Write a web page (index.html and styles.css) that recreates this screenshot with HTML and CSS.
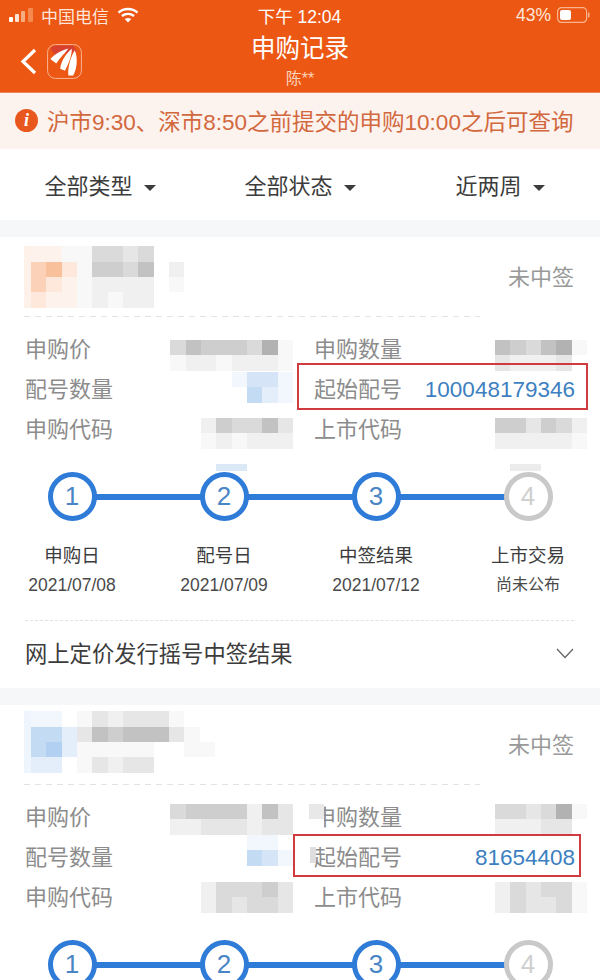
FILE: index.html
```html
<!DOCTYPE html>
<html lang="zh-CN">
<head>
<meta charset="UTF-8">
<meta name="viewport" content="width=device-width, initial-scale=1.0">
<title>申购记录</title>
<link rel="stylesheet" href="styles.css">
</head>

<body>
<header class="top">
    <div class="status-bar">
        <div class="status-left">
            <svg class="signal" width="26" height="16" viewBox="0 0 26 16">
                <rect x="0" y="10" width="4" height="5" rx="1" fill="#fff"/>
                <rect x="6" y="7" width="4" height="8" rx="1" fill="#fde3d3"/>
                <rect x="12" y="4" width="4" height="11" rx="1" fill="#f7ab80"/>
                <rect x="19" y="1" width="5" height="14" rx="1" fill="#f48a50"/>
            </svg>
            <span>中国电信</span>
            <svg class="wifi" width="22" height="16" viewBox="0 0 22 16" fill="none" stroke="#fff" stroke-width="2.4">
                <path d="M1.5 5.6C6.8 .8 15.2 .8 20.5 5.6"/>
                <path d="M5 9C8.300 6.200 13.700 6.200 17 9"/>
                <path d="M11 15.500L7.800 12C9.600 10.500 12.400 10.500 14.200 12Z" fill="#fff" stroke="none"/>
            </svg>
        </div>
        <div class="status-time">下午 12:04</div>
        <div class="status-right">
            <span>43%</span>
            <svg width="33" height="16" viewBox="0 0 33 16">
                <rect x=".6" y=".6" width="29" height="14.800" rx="4" fill="none" stroke="#f7b48f" stroke-width="1.200"/>
                <rect x="3" y="3" width="11" height="10" rx="2" fill="#fff"/>
                <rect x="31" y="5.500" width="1.500" height="5" rx=".7" fill="#f7b48f"/>
            </svg>
        </div>
    </div>
    <div class="nav">
        <div class="nav-left">
            <svg class="back" width="17" height="27" viewBox="0 0 17 27" fill="none" stroke="#fff" stroke-width="3.200">
                <path d="M15 2L3 13.500L15 25"/>
            </svg>
            <svg class="logo" width="35" height="35" viewBox="0 0 36 36">
                <rect x=".6" y=".6" width="34.800" height="34.800" rx="8" fill="#ec5814" stroke="#f9b697" stroke-width="1"/>
                <path d="M4 5.500Q5 1.500 9 1.500H27L31 8L8 11Z" fill="#d8412f"/>
                <path d="M3.500 15.500C8 10 15 6.500 22 4.500C19 9 14 13 9.500 20Z" fill="#fff"/>
                <path d="M13.500 25.500C14.500 18 19 10.500 25.500 5C25.500 12 22.500 20 18.500 27.500Z" fill="#fff"/>
                <path d="M22 32.500C21 25 24 14 28.500 6.500C31.500 13 31.500 24 27 32.500Z" fill="#fff"/>
            </svg>
        </div>
        <div class="nav-title">
            <h1>申购记录</h1>
            <div class="nav-sub">陈**</div>
        </div>
    </div>
</header>

<div class="notice">
    <span class="notice-icon">i</span>
    <span>沪市9:30、深市8:50之前提交的申购10:00之后可查询</span>
</div>

<div class="filters">
    <div class="filter">全部类型<span class="caret"></span></div>
    <div class="filter">全部状态<span class="caret"></span></div>
    <div class="filter">近两周<span class="caret"></span></div>
</div>

<section class="card">
    <div class="card-head">
        <div class="mosaic cols-10 edge-orange">
            <i class="o0"></i><i class="o0"></i><i class="s1"></i><i class="s1"></i><i class="s4"></i><i class="s4"></i><i class="s3"></i><i class="s4"></i><i></i><i></i>
            <i class="o2"></i><i class="o3"></i><i class="o1"></i><i class="s1"></i><i class="s5"></i><i class="s5"></i><i class="s4"></i><i class="s6"></i><i></i><i class="s2"></i>
            <i class="o2"></i><i class="o1"></i><i class="o0"></i><i class="s1"></i><i class="s2"></i><i class="s2"></i><i class="s2"></i><i class="s2"></i><i></i><i class="s1"></i>
            <i class="o1"></i><i class="o0"></i><i class="o0"></i><i class="s1"></i><i class="s2"></i><i class="s1"></i><i class="s2"></i><i class="s2"></i><i></i><i></i>
        </div>
        <span class="card-state">未中签</span>
    </div>
    <div class="fields">
        <div class="field">
            <span>申购价</span>
            <div class="mosaic cols-8 at-11">
                <i class="s4"></i><i class="s6"></i><i class="s5"></i><i class="s5"></i><i class="s5"></i><i class="s4"></i><i class="s7"></i><i class="s1"></i>
                <i class="s1"></i><i class="s2"></i><i class="s2"></i><i class="s1"></i><i class="s2"></i><i class="s2"></i><i class="s2"></i><i class="s1"></i>
            </div>
        </div>
        <div class="field field-right">
            <span>申购数量</span>
            <div class="mosaic cols-6 at-11">
                <i class="s6"></i><i class="s5"></i><i class="s4"></i><i class="s6"></i><i class="s7"></i><i class="s1"></i>
                <i class="s3"></i><i class="s2"></i><i class="s2"></i><i class="s2"></i><i class="s3"></i><i></i>
            </div>
        </div>
        <div class="field">
            <span>配号数量</span>
            <div class="mosaic cols-4 at-3">
                <i class="b0"></i><i class="b2"></i><i class="b2"></i><i class="b0"></i>
                <i></i><i class="b3"></i><i class="b1"></i><i class="b0"></i>
            </div>
        </div>
        <div class="field field-right">
            <span>起始配号</span>
            <span class="field-value">100048179346</span>
            <div class="highlight highlight-a"></div>
        </div>
        <div class="field">
            <span>申购代码</span>
            <div class="mosaic cols-6 at-9">
                <i class="s2"></i><i class="s5"></i><i class="s4"></i><i class="s4"></i><i class="s6"></i><i class="s3"></i>
                <i class="s1"></i><i class="s2"></i><i class="s1"></i><i class="s2"></i><i class="s2"></i><i class="s2"></i>
            </div>
        </div>
        <div class="field field-right">
            <span>上市代码</span>
            <div class="mosaic cols-6 at-9">
                <i class="s5"></i><i class="s5"></i><i class="s3"></i><i class="s5"></i><i class="s4"></i><i class="s2"></i>
                <i class="s2"></i><i class="s2"></i><i class="s2"></i><i class="s2"></i><i class="s2"></i><i class="s1"></i>
            </div>
        </div>
    </div>
    <div class="steps">
        <div class="step"><div class="step-num">1</div><div class="step-name">申购日</div><div class="step-date">2021/07/08</div></div>
        <div class="step"><span class="smear smear-blue"></span><div class="step-num">2</div><div class="step-name">配号日</div><div class="step-date">2021/07/09</div></div>
        <div class="step"><div class="step-num">3</div><div class="step-name">中签结果</div><div class="step-date">2021/07/12</div></div>
        <div class="step step-todo"><span class="smear smear-grey"></span><div class="step-num">4</div><div class="step-name">上市交易</div><div class="step-date">尚未公布</div></div>
    </div>
    <div class="card-foot">
        <span>网上定价发行摇号中签结果</span>
        <svg width="18" height="11" viewBox="0 0 18 11" fill="none" stroke="#666" stroke-width="1.300">
            <path d="M1 1L9 9.500L17 1"/>
        </svg>
    </div>
</section>

<section class="card card-last">
    <div class="card-head">
        <div class="mosaic cols-12 edge-blue lifted">
            <i class="b0"></i><i class="b0"></i><i></i><i class="s1"></i><i class="s3"></i><i class="s2"></i><i class="s3"></i><i class="s3"></i><i class="s3"></i><i class="s1"></i><i></i><i></i>
            <i class="b3"></i><i class="b3"></i><i class="b1"></i><i class="s3"></i><i class="s6"></i><i class="s5"></i><i class="s6"></i><i class="s6"></i><i class="s6"></i><i class="s3"></i><i class="s1"></i><i></i>
            <i class="b3"></i><i class="b4"></i><i class="b1"></i><i class="s1"></i><i class="s1"></i><i class="s1"></i><i class="s1"></i><i class="s1"></i><i></i><i></i><i class="s1"></i><i class="s1"></i>
            <i class="b1"></i><i class="b1"></i><i></i><i class="s1"></i><i class="s3"></i><i class="s2"></i><i class="s3"></i><i class="s3"></i><i></i><i></i><i></i><i></i>
        </div>
        <span class="card-state">未中签</span>
    </div>
    <div class="fields">
        <div class="field">
            <span>申购价</span>
            <div class="mosaic cols-8 at-7">
                <i class="s4"></i><i class="s5"></i><i class="s5"></i><i class="s5"></i><i class="s5"></i><i class="s2"></i><i class="s6"></i><i class="s3"></i>
                <i class="s2"></i><i class="s2"></i><i class="s3"></i><i class="s3"></i><i class="s3"></i><i class="s2"></i><i class="s3"></i><i class="s3"></i>
            </div>
        </div>
        <div class="field field-right">
            <span>申购数量</span>
            <span class="smudge smudge-top"></span>
            <div class="mosaic cols-6 at-7">
                <i class="s4"></i><i class="s4"></i><i class="s3"></i><i class="s4"></i><i class="s7"></i><i class="s1"></i>
                <i class="s2"></i><i class="s2"></i><i class="s2"></i><i class="s3"></i><i class="s3"></i><i></i>
            </div>
        </div>
        <div class="field">
            <span>配号数量</span>
            <div class="mosaic cols-4 at-n2">
                <i></i><i class="b0"></i><i class="b0"></i><i></i>
                <i></i><i class="b3"></i><i class="b2"></i><i class="b0"></i>
            </div>
        </div>
        <div class="field field-right">
            <span>起始配号</span>
            <span class="smudge smudge-low"></span>
            <span class="field-value">81654408</span>
            <div class="highlight highlight-b"></div>
        </div>
        <div class="field">
            <span>申购代码</span>
            <div class="mosaic cols-6 at-5">
                <i class="s2"></i><i class="s4"></i><i class="s4"></i><i class="s4"></i><i class="s5"></i><i class="s3"></i>
                <i class="s2"></i><i class="s4"></i><i class="s3"></i><i class="s4"></i><i class="s4"></i><i class="s3"></i>
            </div>
        </div>
        <div class="field field-right">
            <span>上市代码</span>
            <div class="mosaic cols-6 at-5">
                <i class="s2"></i><i class="s4"></i><i class="s3"></i><i class="s4"></i><i class="s4"></i><i class="s1"></i>
                <i class="s2"></i><i class="s4"></i><i class="s3"></i><i class="s3"></i><i class="s4"></i><i class="s1"></i>
            </div>
        </div>
    </div>
    <div class="steps steps-cut">
        <div class="step"><div class="step-num">1</div></div>
        <div class="step"><span class="smear smear-blue"></span><div class="step-num">2</div></div>
        <div class="step"><div class="step-num">3</div></div>
        <div class="step step-todo"><span class="smear smear-grey"></span><div class="step-num">4</div></div>
    </div>
</section>
</body>
</html>
```

FILE: styles.css
```css
html, body {
    height: 980px;
    overflow: hidden;
}
body {
    margin: 0;
    background-color: #f5f7f9;
    font-family: "Liberation Sans", "Noto Sans CJK SC", sans-serif;
    font-size: 22px;
    color: #444;
}

/* orange header */
.top {
    height: 92px;
    background-color: #ec5814;
    color: #fff;
    border-bottom: 1px solid #f2835a;
}
.status-bar {
    height: 30px;
    padding: 0 10px 0 9px;
    box-sizing: border-box;
    display: grid;
    grid-template-columns: 1fr auto 1fr;
    align-items: center;
    font-size: 17px;
    color: #fde6d9;
}
.status-left {
    display: flex;
    align-items: center;
}
.signal {
    margin-right: 6px;
}
.wifi {
    margin-left: 8px;
}
.status-time {
    color: #fff;
    font-size: 17.500px;
}
.status-right {
    display: flex;
    justify-content: flex-end;
    align-items: center;
    gap: 6px;
    font-size: 17.500px;
}
.nav {
    height: 62px;
    display: grid;
    grid-template-columns: 1fr auto 1fr;
}
.nav-left {
    display: flex;
    align-items: center;
    padding-left: 20px;
    gap: 10px;
}
.nav-title {
    padding-top: 3px;
    text-align: center;
}
.nav-title h1 {
    margin: 0;
    font-size: 24.500px;
    font-weight: normal;
    line-height: 32px;
}
.nav-sub {
    margin-top: 2px;
    font-size: 16px;
    line-height: 24px;
    color: #fbd3bc;
}

/* notice */
.notice {
    height: 56px;
    box-sizing: border-box;
    padding: 0 0 2px 15px;
    display: flex;
    align-items: center;
    gap: 9px;
    background-color: #fcf2ee;
    color: #d2683d;
    font-size: 22.500px;
}
.notice-icon {
    width: 23px;
    height: 23px;
    border-radius: 50%;
    background-color: #e8581e;
    color: #fff;
    font-family: "Liberation Serif", serif;
    font-size: 18px;
    font-style: italic;
    font-weight: bold;
    line-height: 23px;
    text-align: center;
}

/* filters */
.filters {
    height: 71px;
    box-sizing: border-box;
    padding-bottom: 2px;
    margin-bottom: 17px;
    display: grid;
    grid-template-columns: repeat(3, 1fr);
    align-items: center;
    background-color: #fff;
    text-align: center;
    color: #3c3c3c;
}
.caret {
    display: inline-block;
    margin-left: 11px;
    vertical-align: middle;
    border-top: 6px solid #3c3c3c;
    border-left: 6px solid transparent;
    border-right: 6px solid transparent;
}

/* cards */
.card {
    margin-bottom: 17px;
    background-color: #fff;
}
.card-last {
    margin-bottom: 0;
}
.card-head {
    height: 80px;
    box-sizing: border-box;
    padding: 0 26px 0 24px;
    display: flex;
    justify-content: space-between;
    align-items: center;
    position: relative;
}
/* the blur in the shot wipes out the end of this line */
.card-head::after {
    content: "";
    position: absolute;
    left: 24px;
    width: 456px;
    bottom: 0;
    height: 1px;
    background-image: linear-gradient(to right, #e2e2e2 6px, transparent 6px);
    background-size: 11px 1px;
}
.card-state {
    color: #999;
    margin-top: -4px;
}
.lifted {
    margin-bottom: 6px;
}

/* pixelated parts */
.mosaic {
    display: grid;
    grid-auto-rows: 15.330px;
    flex-shrink: 0;
}
.mosaic i {
    display: block;
}
.cols-4 { grid-template-columns: repeat(4, 15.330px); }
.cols-6 { grid-template-columns: repeat(6, 15.330px); }
.cols-8 { grid-template-columns: repeat(8, 15.330px); }
.cols-10 { grid-template-columns: repeat(10, 15.330px); }
.cols-12 { grid-template-columns: repeat(12, 15.330px); }
.at-11 { margin-top: 11px; }
.at-9 { margin-top: 9px; }
.at-7 { margin-top: 7px; }
.at-5 { margin-top: 5px; }
.at-3 { margin-top: 3px; }
.at-n2 { margin-top: -2px; }
.edge-orange { border-left: 7px solid #fdf1e9; margin-right: auto; }
.edge-blue { border-left: 7px solid #eef5fc; margin-right: auto; }
.s1 { background-color: #f8f8f8; }
.s2 { background-color: #f0f0f0; }
.s3 { background-color: #e6e6e6; }
.s4 { background-color: #dadada; }
.s5 { background-color: #cecece; }
.s6 { background-color: #c2c2c2; }
.s7 { background-color: #b2b2b2; }
.o0 { background-color: #fef3ec; }
.o1 { background-color: #fde8db; }
.o2 { background-color: #fbd2b8; }
.o3 { background-color: #f9c09c; }
.b0 { background-color: #f1f7fd; }
.b1 { background-color: #e3eefa; }
.b2 { background-color: #d5e5f7; }
.b3 { background-color: #c4dbf4; }
.b4 { background-color: #b2d0f1; }

/* field rows */
.fields {
    padding: 12px 25px 0 25px;
    display: grid;
    grid-template-columns: 268px 261px;
    grid-auto-rows: 40px;
    column-gap: 21px;
    line-height: 42px;
    color: #8c8c8c;
}
.field {
    display: flex;
    justify-content: space-between;
    height: 40px;
    position: relative;
}
.field-right .mosaic {
    margin-right: -12px;
}
.field-value {
    color: #3d7fc0;
    font-size: 22.500px;
}
.highlight {
    position: absolute;
    border: 2px solid #cf3b3f;
}
.highlight-a {
    left: -17px;
    right: -13px;
    top: -6px;
    bottom: -1px;
}
.highlight-b {
    left: -21px;
    right: -6px;
    top: -3px;
    bottom: 0;
}
.smudge {
    position: absolute;
    background-color: #f2f2f2;
}
.smudge-top {
    left: -5px;
    top: 7px;
    width: 15px;
    height: 30px;
    background-image: linear-gradient(#e8e8e8 15px, #fff 15px);
}
.smudge-low {
    left: -4px;
    top: 10px;
    width: 6px;
    height: 16px;
    background-color: #dedede;
}

/* progress steps */
.steps {
    margin-top: 23px;
    padding: 0 22px;
    display: flex;
    justify-content: space-between;
    text-align: center;
}
.steps-cut {
    height: 40px;
    overflow: hidden;
}
.step {
    width: 100px;
    position: relative;
}
.step:not(:last-child)::after {
    content: "";
    position: absolute;
    left: 50%;
    top: 22px;
    width: 152px;
    height: 6px;
    background-color: #2f7bd8;
}
.step-num {
    width: 49px;
    height: 49px;
    box-sizing: border-box;
    margin: 0 auto;
    padding-top: 5px;
    border: 5px solid #2f7bd8;
    border-radius: 50%;
    background-color: #fff;
    color: #4a86c5;
    font-size: 26px;
    line-height: 29px;
    position: relative;
    z-index: 1;
}
.step-todo .step-num {
    border-color: #c9c9c9;
    color: #cfcfcf;
}
.step-name {
    margin-top: 22px;
    font-size: 18.500px;
    line-height: 26px;
    color: #3c3c3c;
}
.step-date {
    margin-top: 5px;
    font-size: 17.500px;
    line-height: 22px;
    color: #4a4a4a;
}
.step-todo .step-date {
    font-size: 16px;
}
.smear {
    position: absolute;
    top: -8px;
    height: 7px;
}
.smear-blue {
    left: 42px;
    width: 31px;
    background-color: #dbe8f6;
}
.smear-grey {
    left: 32px;
    width: 31px;
    background-color: #ececec;
}

/* bottom row of a card */
.card-foot {
    height: 68px;
    margin: 24px 26px 0 25px;
    padding-bottom: 6px;
    box-sizing: border-box;
    display: flex;
    justify-content: space-between;
    align-items: center;
    border-top: 1px dashed #e2e2e2;
    color: #3c3c3c;
    font-size: 22.300px;
}
.card-foot svg {
    margin-top: 4px;
}
```
